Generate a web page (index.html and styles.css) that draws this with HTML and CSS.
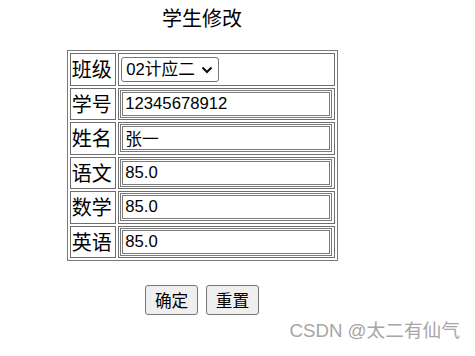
FILE: index.html
```html
<!DOCTYPE html>
<html lang="zh-CN">
<head>
  <meta charset="UTF-8" />
  <title>学生修改</title>
  <link rel="stylesheet" href="styles.css">
</head>
<body>
  <div class="page">
    <div class="title">学生修改</div>

    <form class="edit-form">
      <table class="form-table">
        <tr>
          <td class="label">班级</td>
          <td class="field">
            <span class="select-wrap">
              <select class="class-select">
                <option>02计应二</option>
              </select>
              <svg class="chevron" width="12" height="8" viewBox="0 0 12 8">
                <path d="M1.5 1.5 L6 6 L10.5 1.5" fill="none" stroke="#111" stroke-width="2.2"/>
              </svg>
            </span>
          </td>
        </tr>
        <tr>
          <td class="label">学号</td>
          <td class="field"><input type="text" value="12345678912"></td>
        </tr>
        <tr>
          <td class="label">姓名</td>
          <td class="field"><input type="text" value="张一"></td>
        </tr>
        <tr>
          <td class="label">语文</td>
          <td class="field"><input type="text" value="85.0"></td>
        </tr>
        <tr>
          <td class="label">数学</td>
          <td class="field"><input type="text" value="85.0"></td>
        </tr>
        <tr>
          <td class="label">英语</td>
          <td class="field"><input type="text" value="85.0"></td>
        </tr>
      </table>

      <div class="actions">
        <button type="submit">确定</button>
        <button type="reset">重置</button>
      </div>
    </form>
  </div>

  <div class="watermark">CSDN @太二有仙气</div>
</body>
</html>
```

FILE: styles.css
```css
body {
  margin: 0;
  font-family: "Liberation Sans", "Noto Sans CJK SC", sans-serif;
  color: #000;
  background: #fff;
}

.page {
  width: 404px;
}

.title {
  text-align: center;
  font-family: "Noto Sans CJK SC", sans-serif;
  font-size: 20px;
  line-height: 26px;
  padding-top: 5px;
  margin-bottom: 19px;
}

.form-table {
  margin: 0 auto;
  border: 1px solid #7a7a7a;
  border-spacing: 2px;
}

.form-table td {
  border: 1px solid #6e6e6e;
  padding: 1.25px;
  vertical-align: middle;
}

.label {
  font-family: "Noto Sans CJK SC", sans-serif;
  font-size: 20px;
  line-height: 28px;
  width: 42px;
  white-space: nowrap;
}

.field input {
  display: block;
  box-sizing: border-box;
  width: 212px;
  height: 28px;
  margin: 0;
  padding: 0 0 0 2px;
  border: 3px double #7a7a7a;
  font-family: "Liberation Sans", "Noto Sans CJK SC", sans-serif;
  font-size: 16.7px;
  color: #000;
}

.select-wrap {
  position: relative;
  display: block;
  width: 98px;
  margin-left: 1px;
}

.class-select {
  display: block;
  box-sizing: border-box;
  width: 98px;
  height: 25px;
  margin: 0;
  padding: 0 0 0 4px;
  border: 1px solid #767676;
  border-radius: 3px;
  appearance: none;
  -webkit-appearance: none;
  font-family: "Liberation Sans", "Noto Sans CJK SC", sans-serif;
  font-size: 16.7px;
  color: #000;
  background: #fff;
}

.chevron {
  position: absolute;
  right: 6px;
  top: 9px;
  pointer-events: none;
}

.actions {
  text-align: center;
  margin-top: 24px;
}

.actions button {
  box-sizing: border-box;
  height: 30px;
  padding: 0 8.5px;
  margin: 0 2px;
  border: 1px solid #767676;
  border-radius: 3px;
  background: #efefef;
  font-family: "Noto Sans CJK SC", sans-serif;
  font-size: 16.7px;
  line-height: 1;
  color: #000;
}

.watermark {
  position: absolute;
  right: 15px;
  top: 318px;
  font-family: "Liberation Sans", "Noto Sans CJK SC", sans-serif;
  font-size: 18.7px;
  line-height: 26px;
  color: #a6a6a6;
}
```
